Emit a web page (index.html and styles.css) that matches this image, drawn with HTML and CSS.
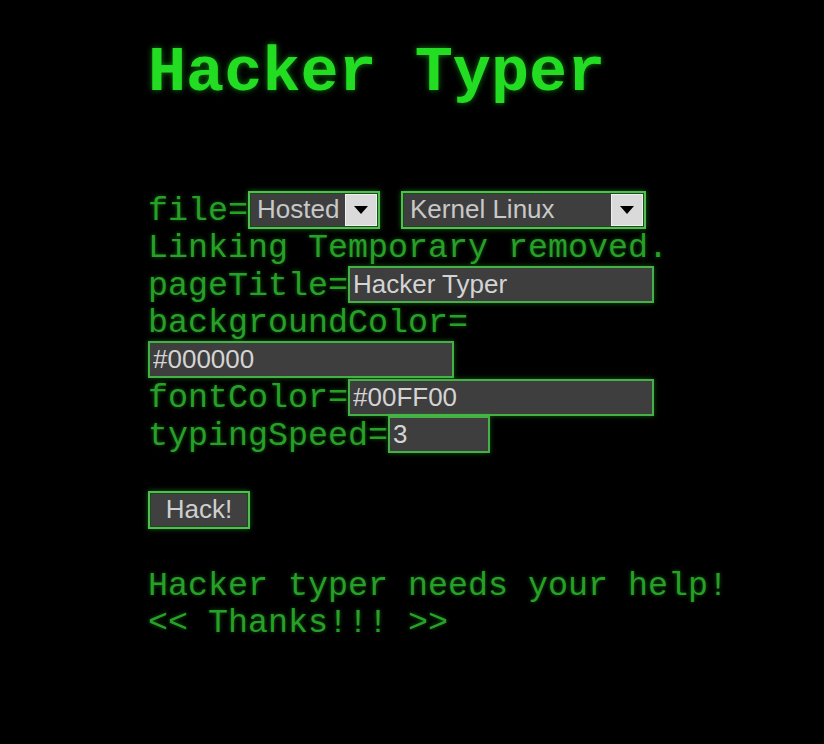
FILE: index.html
```html
<!DOCTYPE html>
<html lang="en">
<head>
    <meta charset="UTF-8">
    <meta name="viewport" content="width=device-width, initial-scale=1.0">
    <title>Hacker Typer</title>
    <link rel="stylesheet" href="styles.css">
</head>
<body>
    <div class="screen">
        <h1 class="title">Hacker Typer</h1>

        <form class="settings" onsubmit="return false">
            <div class="line">
                <span class="label">file=</span>
                <div class="select select-file">
                    <span class="value">Hosted</span>
                    <span class="arrow"><svg width="14" height="8" viewBox="0 0 14 8"><polygon points="0,0 14,0 7,8" fill="#000"/></svg></span>
                </div>
                <div class="select select-kernel">
                    <span class="value">Kernel Linux</span>
                    <span class="arrow"><svg width="14" height="8" viewBox="0 0 14 8"><polygon points="0,0 14,0 7,8" fill="#000"/></svg></span>
                </div>
            </div>
            <div class="line">
                <span class="label">Linking Temporary removed.</span>
            </div>
            <div class="line">
                <span class="label">pageTitle=</span>
                <input class="field field-wide" type="text" value="Hacker Typer">
            </div>
            <div class="line">
                <span class="label">backgroundColor=</span>
            </div>
            <div class="line">
                <input class="field field-wide" type="text" value="#000000">
            </div>
            <div class="line">
                <span class="label">fontColor=</span>
                <input class="field field-wide" type="text" value="#00FF00">
            </div>
            <div class="line">
                <span class="label">typingSpeed=</span>
                <input class="field field-short" type="text" value="3">
            </div>
            <div class="line"></div>
            <div class="line">
                <button class="hack" type="submit">Hack!</button>
            </div>
            <div class="line"></div>
            <div class="line">
                <span class="label">Hacker typer needs your help!</span>
            </div>
            <div class="line">
                <span class="label">&lt;&lt; Thanks!!! &gt;&gt;</span>
            </div>
        </form>
    </div>
</body>
</html>
```

FILE: styles.css
```css
/* Reset */
body, h1, form {
    margin: 0;
    padding: 0;
}

body {
    background-color: #000;
    color: #27a027;
    font-family: "Courier New", "Liberation Mono", monospace;
}

/* Page area */
.screen {
    padding: 42px 0 0 148px;
}

.title {
    font-size: 63.5px;
    line-height: 62px;
    font-weight: bold;
    color: #22dd22;
    text-shadow: 0 0 6px rgba(34, 221, 34, 0.55);
    margin-bottom: 87px;
}

/* Settings lines */
.line {
    display: flex;
    align-items: center;
    height: 37.5px;
}

.label {
    font-size: 33.34px;
    line-height: 37.5px;
    padding-top: 3px;
    white-space: pre;
    text-shadow: 0 0 4px rgba(42, 168, 42, 0.5);
}

/* Fake select boxes */
.select {
    display: flex;
    align-items: center;
    box-sizing: border-box;
    height: 38px;
    padding: 1px 1px 1px 7px;
    background-color: #3e3e3e;
    border: 2px solid #4fbf4f;
    box-shadow: 0 0 5px rgba(60, 220, 60, 0.45), inset 0 0 0 1px #1d4a1d;
}

.select-file {
    width: 132px;
}

.select-kernel {
    width: 245px;
    margin-left: 21px;
}

.select .value {
    flex: 1;
    font-family: "Liberation Sans", Arial, sans-serif;
    font-size: 26px;
    color: #c8c8c8;
}

.select .arrow {
    display: flex;
    align-items: center;
    justify-content: center;
    width: 32px;
    height: 32px;
    background-color: #dadada;
    border: 1px solid #f0f0f0;
    box-sizing: border-box;
}

/* Text fields */
.field {
    box-sizing: border-box;
    height: 37px;
    margin: 0;
    padding: 0 3px;
    background-color: #3e3e3e;
    border: 2px solid #45b045;
    box-shadow: 0 0 5px rgba(60, 220, 60, 0.4);
    color: #d4d4d4;
    font-family: "Liberation Sans", Arial, sans-serif;
    font-size: 26px;
    outline: none;
}

.field-wide {
    width: 306px;
}

.field-short {
    width: 102px;
}

/* Button */
.hack {
    box-sizing: border-box;
    width: 102px;
    height: 38px;
    background-color: #404040;
    border: 2px solid #4fbf4f;
    box-shadow: 0 0 5px rgba(60, 220, 60, 0.45), inset 0 0 0 1px #1d4a1d;
    color: #cfcfcf;
    font-family: "Liberation Sans", Arial, sans-serif;
    font-size: 26px;
    padding: 0;
    cursor: pointer;
}
```
